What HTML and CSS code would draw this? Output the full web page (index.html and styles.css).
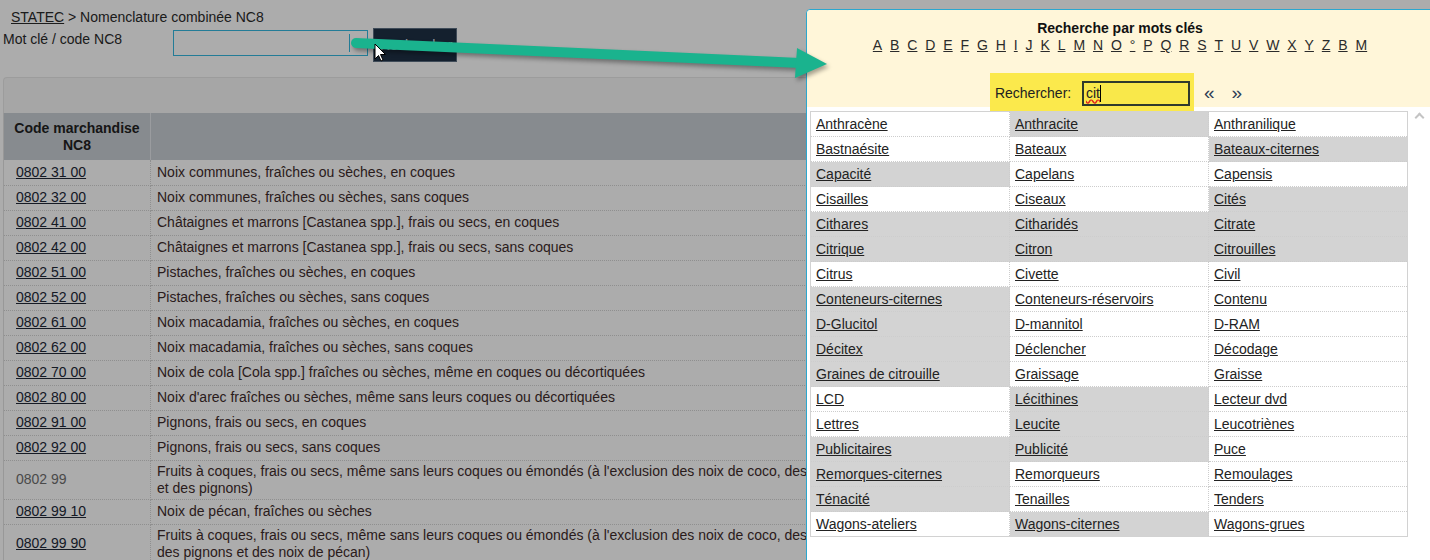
FILE: index.html
```html
<!DOCTYPE html>
<html lang="fr">
<head>
  <meta charset="UTF-8">
  <meta name="viewport" content="width=device-width, initial-scale=1.0">
  <title>Nomenclature combinée NC8</title>
  <link rel="stylesheet" href="styles.css">
</head>
<body>
  <div class="crumb"><a href="#">STATEC</a> &gt; Nomenclature combinée NC8</div>
  <form class="search">
    <label>Mot clé / code NC8</label>
    <span class="field"><input type="text"></span>
    <button type="button">Rechercher</button>
  </form>
  <div class="panel"></div>
  <table class="nc8">
    <thead>
      <tr><th class="code">Code marchandise<br>NC8</th><th></th></tr>
    </thead>
    <tbody>
      <tr><td><a href="#">0802 31 00</a></td><td>Noix communes, fraîches ou sèches, en coques</td></tr>
      <tr><td><a href="#">0802 32 00</a></td><td>Noix communes, fraîches ou sèches, sans coques</td></tr>
      <tr><td><a href="#">0802 41 00</a></td><td>Châtaignes et marrons [Castanea spp.], frais ou secs, en coques</td></tr>
      <tr><td><a href="#">0802 42 00</a></td><td>Châtaignes et marrons [Castanea spp.], frais ou secs, sans coques</td></tr>
      <tr><td><a href="#">0802 51 00</a></td><td>Pistaches, fraîches ou sèches, en coques</td></tr>
      <tr><td><a href="#">0802 52 00</a></td><td>Pistaches, fraîches ou sèches, sans coques</td></tr>
      <tr><td><a href="#">0802 61 00</a></td><td>Noix macadamia, fraîches ou sèches, en coques</td></tr>
      <tr><td><a href="#">0802 62 00</a></td><td>Noix macadamia, fraîches ou sèches, sans coques</td></tr>
      <tr><td><a href="#">0802 70 00</a></td><td>Noix de cola [Cola spp.] fraîches ou sèches, même en coques ou décortiquées</td></tr>
      <tr><td><a href="#">0802 80 00</a></td><td>Noix d'arec fraîches ou sèches, même sans leurs coques ou décortiquées</td></tr>
      <tr><td><a href="#">0802 91 00</a></td><td>Pignons, frais ou secs, en coques</td></tr>
      <tr><td><a href="#">0802 92 00</a></td><td>Pignons, frais ou secs, sans coques</td></tr>
      <tr><td class="grp">0802 99</td><td>Fruits à coques, frais ou secs, même sans leurs coques ou émondés (à l'exclusion des noix de coco, des<br>et des pignons)</td></tr>
      <tr><td><a href="#">0802 99 10</a></td><td>Noix de pécan, fraîches ou sèches</td></tr>
      <tr><td><a href="#">0802 99 90</a></td><td>Fruits à coques, frais ou secs, même sans leurs coques ou émondés (à l'exclusion des noix de coco, des<br>des pignons et des noix de pécan)</td></tr>
    </tbody>
  </table>

  <div class="mask"></div>

  <div class="dialog">
    <div class="dialog-head">
      <h2>Recherche par mots clés</h2>
      <div class="letters">
        <a href="#">A</a> <a href="#">B</a> <a href="#">C</a> <a href="#">D</a> <a href="#">E</a> <a href="#">F</a> <a href="#">G</a> <a href="#">H</a> <a href="#">I</a> <a href="#">J</a> <a href="#">K</a> <a href="#">L</a> <a href="#">M</a> <a href="#">N</a> <a href="#">O</a> <a href="#">°</a> <a href="#">P</a> <a href="#">Q</a> <a href="#">R</a> <a href="#">S</a> <a href="#">T</a> <a href="#">U</a> <a href="#">V</a> <a href="#">W</a> <a href="#">X</a> <a href="#">Y</a> <a href="#">Z</a> <a href="#">B</a> <a href="#">M</a>
      </div>
      <div class="finder">
        <div class="hilite">
          <span class="lbl">Rechercher:</span>
          <div class="kw"><span class="typed">cit</span><span class="caret"></span></div>
        </div>
        <a href="#" class="pager">«</a>
        <a href="#" class="pager">»</a>
      </div>
    </div>
    <span class="scroll-up"></span>
    <table class="words">
      <tr><td><a href="#">Anthracène</a></td><td class="on"><a href="#">Anthracite</a></td><td><a href="#">Anthranilique</a></td></tr>
      <tr><td><a href="#">Bastnaésite</a></td><td><a href="#">Bateaux</a></td><td class="on"><a href="#">Bateaux-citernes</a></td></tr>
      <tr><td class="on"><a href="#">Capacité</a></td><td><a href="#">Capelans</a></td><td><a href="#">Capensis</a></td></tr>
      <tr><td><a href="#">Cisailles</a></td><td><a href="#">Ciseaux</a></td><td class="on"><a href="#">Cités</a></td></tr>
      <tr><td class="on"><a href="#">Cithares</a></td><td class="on"><a href="#">Citharidés</a></td><td class="on"><a href="#">Citrate</a></td></tr>
      <tr><td class="on"><a href="#">Citrique</a></td><td class="on"><a href="#">Citron</a></td><td class="on"><a href="#">Citrouilles</a></td></tr>
      <tr><td><a href="#">Citrus</a></td><td><a href="#">Civette</a></td><td><a href="#">Civil</a></td></tr>
      <tr><td class="on"><a href="#">Conteneurs-citernes</a></td><td><a href="#">Conteneurs-réservoirs</a></td><td><a href="#">Contenu</a></td></tr>
      <tr><td class="on"><a href="#">D-Glucitol</a></td><td><a href="#">D-mannitol</a></td><td><a href="#">D-RAM</a></td></tr>
      <tr><td class="on"><a href="#">Décitex</a></td><td><a href="#">Déclencher</a></td><td><a href="#">Décodage</a></td></tr>
      <tr><td class="on"><a href="#">Graines de citrouille</a></td><td><a href="#">Graissage</a></td><td><a href="#">Graisse</a></td></tr>
      <tr><td><a href="#">LCD</a></td><td class="on"><a href="#">Lécithines</a></td><td><a href="#">Lecteur dvd</a></td></tr>
      <tr><td><a href="#">Lettres</a></td><td class="on"><a href="#">Leucite</a></td><td><a href="#">Leucotriènes</a></td></tr>
      <tr><td class="on"><a href="#">Publicitaires</a></td><td class="on"><a href="#">Publicité</a></td><td><a href="#">Puce</a></td></tr>
      <tr><td class="on"><a href="#">Remorques-citernes</a></td><td><a href="#">Remorqueurs</a></td><td><a href="#">Remoulages</a></td></tr>
      <tr><td class="on"><a href="#">Ténacité</a></td><td><a href="#">Tenailles</a></td><td><a href="#">Tenders</a></td></tr>
      <tr><td><a href="#">Wagons-ateliers</a></td><td class="on"><a href="#">Wagons-citernes</a></td><td><a href="#">Wagons-grues</a></td></tr>
    </table>
  </div>

  <!-- annotation: arrow + mouse pointer -->
  <svg class="arrow" width="1430" height="560" viewBox="0 0 1430 560">
    <g class="shaft">
      <line x1="356" y1="43" x2="800" y2="63" stroke="#1ab38e" stroke-width="10" stroke-linecap="round"/>
      <polygon points="797,48 827,64 795,78" fill="#1ab38e"/>
    </g>
    <path transform="translate(375 44)" d="M0 0 L0 15 L3.5 11.5 L6 17 L8 16 L5.5 10.5 L10.5 10.5 Z" fill="#fff" stroke="#000" stroke-width="1"/>
  </svg>
</body>
</html>
```

FILE: styles.css
```css
*{ box-sizing: border-box; }
body{ margin: 0; font: 14px/16px "Liberation Sans", Arial, sans-serif; color: #333; background: #fff; overflow: hidden; }
a{ color: #222838; }

.crumb{ padding: 9px 0 0 11px; height: 25px; color: #2a2a2a; }
.crumb a{ color: #2a2a2a; }

.search{ display: flex; align-items: flex-start; margin: 0; padding-top: 3px; }
.search label{ width: 173px; padding: 3px 0 0 3px; color: #2a2a2a; }
.field{ position: relative; display: block; margin-top: 2px; }
.field input{ display: block; width: 195px; height: 26px; padding: 0 4px; border: 1px solid #34b8e0; background: #fff; outline: none; }
.field::after{ content: ""; position: absolute; left: 176px; top: 4px; width: 1px; height: 18px; background: #34b8e0; }
.search button{ margin-left: 5px; width: 84px; height: 34px; background: #1e3045; border: 1px solid #5e6f83; color: #d8dde3; font: inherit; }

.panel{ margin: 15px 0 0 3px; height: 36px; background: #f6f6f6; border-top: 1px solid #e8e8e8; border-left: 1px solid #e8e8e8; border-top-left-radius: 4px; }

.nc8{ margin-left: 3px; width: 1420px; border-collapse: collapse; border-left: 1px solid #e2e2e2; }
.nc8 th{ height: 47px; padding: 0 4px; background: #c8ced4; color: #222; line-height: 17px; }
.nc8 th + th{ border-left: 1px solid #e4e8ec; }
.nc8 th.code{ width: 147px; }
.nc8 tbody tr{ height: 25px; }
.nc8 td{ padding: 2px 6px; line-height: 17px; border-bottom: 1px dotted #d4d4d4; color: #3e2c2c; vertical-align: middle; }
.nc8 td:first-child{ padding-left: 12px; border-right: 1px dotted #d4d4d4; }
.nc8 td.grp{ color: #6e6e6e; }

.mask{ position: fixed; top: 0; left: 0; right: 0; bottom: 0; background: rgba(0, 0, 0, .325); }

.dialog{ position: absolute; left: 806px; top: 9px; width: 628px; height: 560px; background: #fff; border: 1px solid #2aa7cf; border-top-left-radius: 4px; }
.dialog-head{ height: 97px; padding-top: 10px; background: #fff6d9; text-align: center; border-top-left-radius: 4px; }
.dialog-head h2{ margin: 0; font-size: 14px; line-height: 17px; color: #111; }
.letters{ line-height: 17px; }
.letters a{ margin: 0 2px; color: #2b2b2b; }

.finder{ display: inline-flex; align-items: flex-start; margin-top: 19px; margin-right: 8px; }
.hilite{ display: flex; align-items: flex-start; height: 38px; padding: 8px 4px 0 5px; background: #fbe94c; }
.lbl{ margin-top: 4px; width: 87px; text-align: left; line-height: 17px; color: #222; }
.kw{ display: flex; align-items: center; width: 108px; height: 25px; padding-left: 2px; border: 2px solid #2f3a2c; background: #f9e84a; text-align: left; }
.typed{ color: #222; line-height: 17px; text-decoration: underline wavy #e2231a; text-underline-offset: 1px; }
.caret{ width: 1px; height: 17px; background: #000; }
.pager{ margin: 10px 0 0 10px; font-size: 19px; line-height: 19px; color: #2e3d55; text-decoration: none; }
.pager + .pager{ margin-left: 17px; }

.scroll-up{ position: absolute; left: 609px; top: 104px; width: 7px; height: 7px; border-left: 2px solid #c4c4c4; border-top: 2px solid #c4c4c4; transform: rotate(45deg); }

.words{ margin: 4px 0 0 3px; width: 598px; border-collapse: collapse; table-layout: fixed; border: 1px solid #d2d2d2; }
.words td{ height: 25px; padding: 0 5px; line-height: 17px; border: 1px dotted #cdcdcd; white-space: nowrap; }
.words td.on{ background: #d3d3d3; }
.words a{ color: #222; }

.arrow{ position: fixed; top: 0; left: 0; pointer-events: none; }
.shaft{ filter: drop-shadow(2px 3px 2px rgba(0, 0, 0, .35)); }
```
